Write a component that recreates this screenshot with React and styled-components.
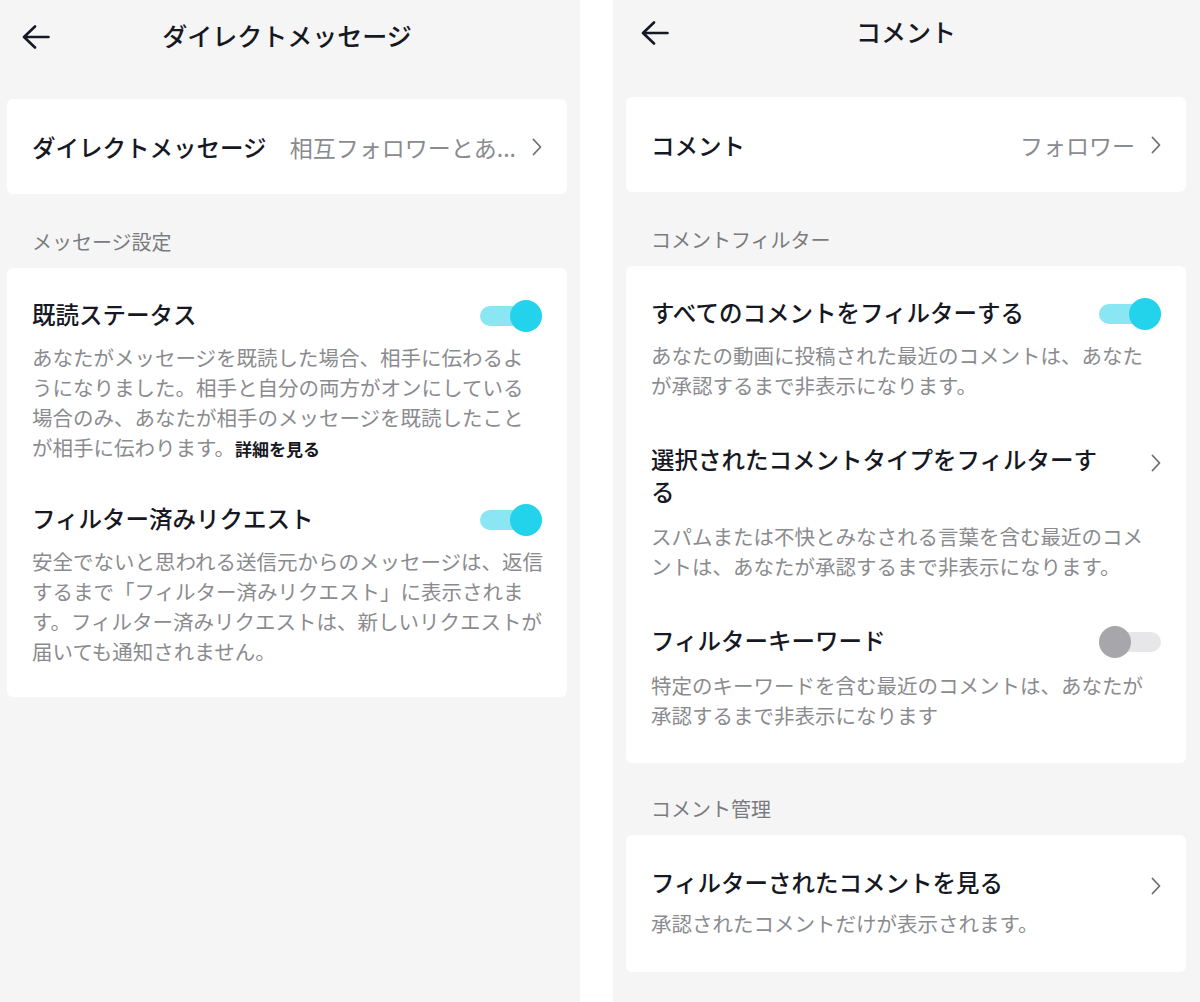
import React from "react";
import styled, { createGlobalStyle } from "styled-components";

const Global = createGlobalStyle`
  html, body { margin: 0; padding: 0; background: #ffffff; }
  body {
    font-family: "Noto Sans CJK JP", "Noto Sans", sans-serif;
    color: #161823;
    -webkit-font-smoothing: antialiased;
  }
  * { box-sizing: border-box; }
`;

const Page = styled.div`
  display: flex;
  gap: 33px;
  width: 1200px;
  height: 1002px;
  overflow: hidden;
  background: #ffffff;
`;

const Panel = styled.section`
  flex: none;
  width: ${(p) => p.$w}px;
  height: 100%;
  background: #f5f5f5;
  padding: ${(p) => p.$top}px 0 0 ${(p) => p.$left}px;
`;

const Column = styled.div`
  width: 560px;
  display: flex;
  flex-direction: column;
`;

const Header = styled.header`
  height: 66px;
  display: grid;
  grid-template-columns: 1fr auto 1fr;
  align-items: center;
`;

const BackButton = styled.button`
  justify-self: start;
  margin-left: 15px;
  padding: 0;
  border: 0;
  background: none;
  display: flex;
  color: #161823;
`;

const HeaderTitle = styled.h1`
  margin: 0 0 4px;
  font-size: 25px;
  line-height: 34px;
  font-weight: 500;
`;

const LinkRow = styled.div`
  margin-top: ${(p) => p.$mt}px;
  height: 95px;
  padding: 0 25px;
  background: #ffffff;
  border-radius: 6px;
  display: flex;
  align-items: center;
`;

const RowTitle = styled.span`
  font-size: 23.5px;
  line-height: 32px;
  font-weight: 500;
  white-space: nowrap;
`;

const RowValue = styled.span`
  margin-left: auto;
  margin-right: 16px;
  font-size: 23px;
  line-height: 32px;
  color: #8a8b90;
  white-space: nowrap;
`;

const SectionLabel = styled.div`
  margin: ${(p) => p.$mt}px 0 12px 25px;
  font-size: 20px;
  line-height: 28px;
  color: #7a7b7f;
`;

const Card = styled.div`
  background: #ffffff;
  border-radius: 6px;
  padding: ${(p) => p.$pt}px 19px ${(p) => p.$pb}px 25px;
  display: flex;
  flex-direction: column;
  gap: ${(p) => p.$gap}px;
`;

const Item = styled.div`
  display: flex;
  flex-direction: column;
  gap: ${(p) => p.$gap}px;
`;

const ItemHead = styled.div`
  display: flex;
  align-items: flex-start;
  justify-content: space-between;
  gap: 16px;
  padding-right: 6px;
`;

const ItemTitle = styled.div`
  font-size: 23.5px;
  line-height: 32px;
  font-weight: 500;
  max-width: ${(p) => (p.$maxW ? `${p.$maxW}px` : "none")};
`;

const Desc = styled.p`
  margin: 0;
  max-width: ${(p) => p.$w}px;
  font-size: 20.5px;
  line-height: 30px;
  color: #8a8b8f;
`;

const DetailLink = styled.span`
  font-size: 17px;
  line-height: 1;
  font-weight: 700;
  color: #161823;
`;

const SwitchBox = styled.span`
  position: relative;
  flex: none;
  width: 62px;
  height: 32px;
  margin-top: 2px;
`;

const SwitchTrack = styled.span`
  position: absolute;
  left: 0;
  right: 0;
  top: 6px;
  height: 20px;
  border-radius: 10px;
  background: ${(p) => (p.$on ? "#8ae6f2" : "#e7e7e9")};
`;

const SwitchKnob = styled.span`
  position: absolute;
  top: 0;
  left: ${(p) => (p.$on ? 30 : 0)}px;
  width: 32px;
  height: 32px;
  border-radius: 50%;
  background: ${(p) => (p.$on ? "#22d3eb" : "#a6a6ab")};
`;

const ChevronBox = styled.span`
  flex: none;
  display: flex;
  margin-top: ${(p) => p.$mt}px;
  color: #6e6f73;
`;

const Toggle = ({ on }) => (
  <SwitchBox>
    <SwitchTrack $on={on} />
    <SwitchKnob $on={on} />
  </SwitchBox>
);

const Chevron = ({ mt = 0 }) => (
  <ChevronBox $mt={mt}>
    <svg width="10" height="18" viewBox="0 0 10 18" fill="none">
      <polyline
        points="1.5,1.5 8.5,9 1.5,16.5"
        stroke="currentColor"
        strokeWidth="1.8"
        strokeLinecap="round"
        strokeLinejoin="round"
      />
    </svg>
  </ChevronBox>
);

const BackArrow = () => (
  <BackButton aria-label="戻る">
    <svg width="28" height="24" viewBox="0 0 28 24" fill="none">
      <path
        d="M26.5 12H2.5M13 1.5L2 12L13 22.5"
        stroke="currentColor"
        strokeWidth="2.6"
        strokeLinecap="round"
        strokeLinejoin="round"
      />
    </svg>
  </BackButton>
);

export default function App() {
  return (
    <>
      <Global />
      <Page>
        <Panel $w={580} $left={7} $top={4}>
          <Column>
            <Header>
              <BackArrow />
              <HeaderTitle>ダイレクトメッセージ</HeaderTitle>
            </Header>
            <LinkRow $mt={29}>
              <RowTitle>ダイレクトメッセージ</RowTitle>
              <RowValue>相互フォロワーとあ...</RowValue>
              <Chevron />
            </LinkRow>

            <SectionLabel $mt={34}>メッセージ設定</SectionLabel>
            <Card $pt={30} $pb={31} $gap={40}>
              <Item $gap={10}>
                <ItemHead>
                  <ItemTitle>既読ステータス</ItemTitle>
                  <Toggle on />
                </ItemHead>
                <Desc $w={500}>
                  あなたがメッセージを既読した場合、相手に伝わるようになりました。相手と自分の両方がオンにしている場合のみ、あなたが相手のメッセージを既読したことが相手に伝わります。
                  <DetailLink>詳細を見る</DetailLink>
                </Desc>
              </Item>
              <Item $gap={10}>
                <ItemHead>
                  <ItemTitle>フィルター済みリクエスト</ItemTitle>
                  <Toggle on />
                </ItemHead>
                <Desc $w={515}>
                  安全でないと思われる送信元からのメッセージは、返信するまで「フィルター済みリクエスト」に表示されます。フィルター済みリクエストは、新しいリクエストが届いても通知されません。
                </Desc>
              </Item>
            </Card>
          </Column>
        </Panel>

        <Panel $w={587} $left={13} $top={0}>
          <Column>
            <Header>
              <BackArrow />
              <HeaderTitle>コメント</HeaderTitle>
            </Header>
            <LinkRow $mt={31}>
              <RowTitle>コメント</RowTitle>
              <RowValue>フォロワー</RowValue>
              <Chevron />
            </LinkRow>

            <SectionLabel $mt={34}>コメントフィルター</SectionLabel>
            <Card $pt={30} $pb={33} $gap={43}>
              <Item $gap={10}>
                <ItemHead>
                  <ItemTitle>すべてのコメントをフィルターする</ItemTitle>
                  <Toggle on />
                </ItemHead>
                <Desc $w={505}>
                  あなたの動画に投稿された最近のコメントは、あなたが承認するまで非表示になります。
                </Desc>
              </Item>
              <Item $gap={14}>
                <ItemHead>
                  <ItemTitle $maxW={462}>選択されたコメントタイプをフィルターする</ItemTitle>
                  <Chevron mt={11} />
                </ItemHead>
                <Desc $w={505}>
                  スパムまたは不快とみなされる言葉を含む最近のコメントは、あなたが承認するまで非表示になります。
                </Desc>
              </Item>
              <Item $gap={12}>
                <ItemHead>
                  <ItemTitle>フィルターキーワード</ItemTitle>
                  <Toggle on={false} />
                </ItemHead>
                <Desc $w={505}>
                  特定のキーワードを含む最近のコメントは、あなたが承認するまで非表示になります
                </Desc>
              </Item>
            </Card>

            <SectionLabel $mt={32}>コメント管理</SectionLabel>
            <Card $pt={31} $pb={34} $gap={43}>
              <Item $gap={10}>
                <ItemHead>
                  <ItemTitle>フィルターされたコメントを見る</ItemTitle>
                  <Chevron mt={11} />
                </ItemHead>
                <Desc $w={505}>承認されたコメントだけが表示されます。</Desc>
              </Item>
            </Card>
          </Column>
        </Panel>
      </Page>
    </>
  );
}
